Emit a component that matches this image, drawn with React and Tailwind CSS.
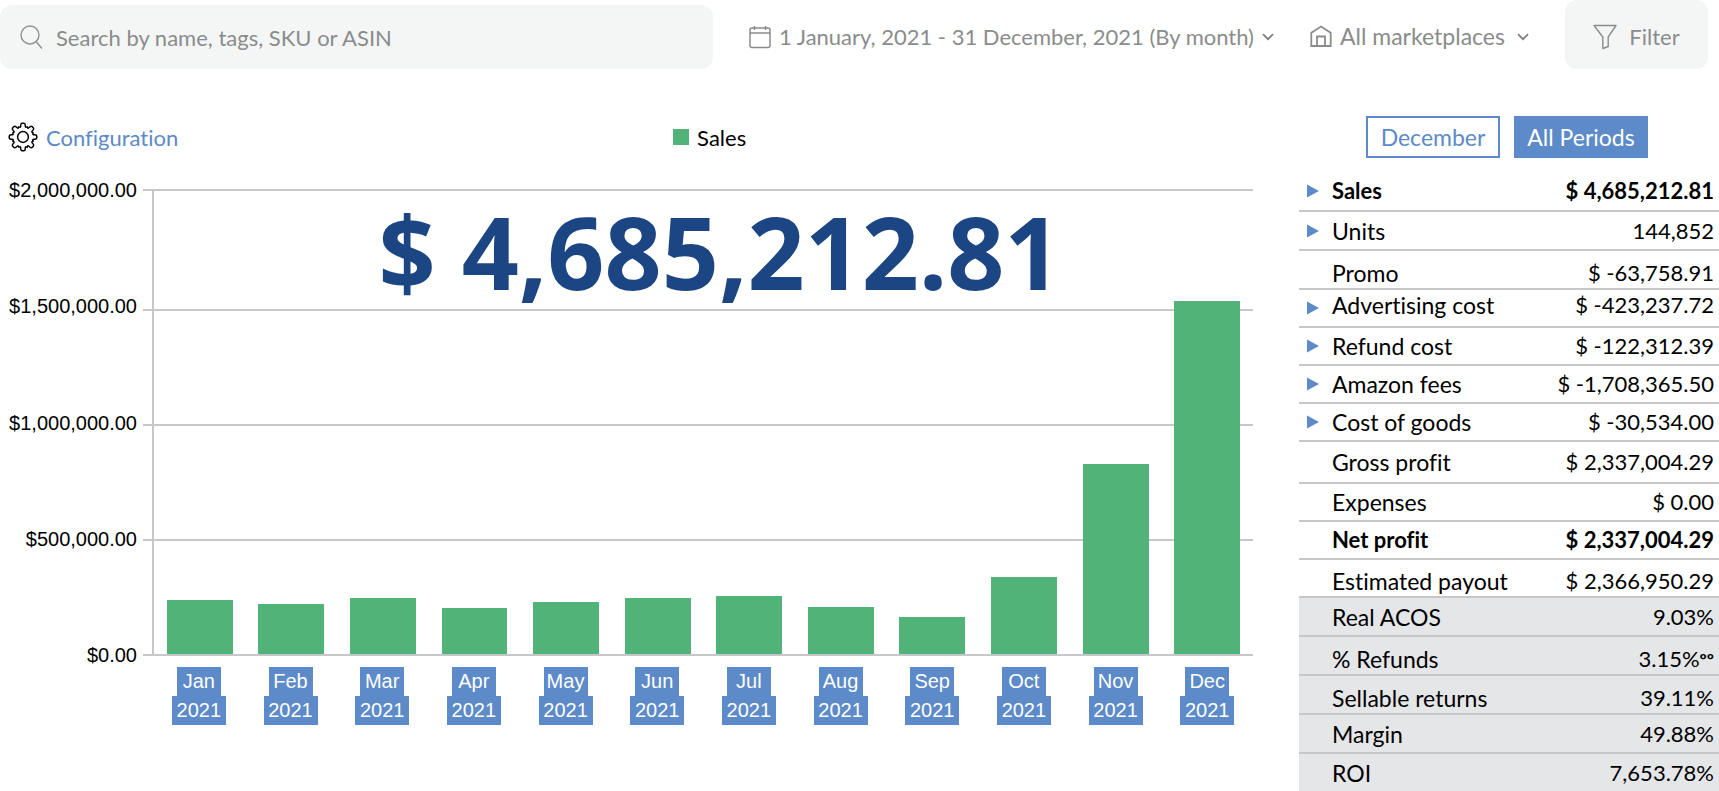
import React, { useState } from 'react';

const MAX_SALES = 2000000;

const AXIS_LABELS = ['$2,000,000.00', '$1,500,000.00', '$1,000,000.00', '$500,000.00', '$0.00'];

const MONTHS = [
    { name: 'Jan', sales: 232000 },
    { name: 'Feb', sales: 215000 },
    { name: 'Mar', sales: 239000 },
    { name: 'Apr', sales: 198000 },
    { name: 'May', sales: 224000 },
    { name: 'Jun', sales: 241000 },
    { name: 'Jul', sales: 250000 },
    { name: 'Aug', sales: 204000 },
    { name: 'Sep', sales: 160000 },
    { name: 'Oct', sales: 331000 },
    { name: 'Nov', sales: 819000 },
    { name: 'Dec', sales: 1518000 },
];

const ROWS = [
    { label: 'Sales', value: '$ 4,685,212.81', height: 'h-[39px]', expandable: true, bold: true },
    { label: 'Units', value: '144,852', height: 'h-[39px]', expandable: true },
    { label: 'Promo', value: '$ -63,758.91', height: 'h-[39px]', align: 'low' },
    { label: 'Advertising cost', value: '$ -423,237.72', height: 'h-[38px]', expandable: true, align: 'high' },
    { label: 'Refund cost', value: '$ -122,312.39', height: 'h-[38px]', expandable: true },
    { label: 'Amazon fees', value: '$ -1,708,365.50', height: 'h-[38px]', expandable: true },
    { label: 'Cost of goods', value: '$ -30,534.00', height: 'h-[38px]', expandable: true },
    { label: 'Gross profit', value: '$ 2,337,004.29', height: 'h-[42px]' },
    { label: 'Expenses', value: '$ 0.00', height: 'h-[38px]' },
    { label: 'Net profit', value: '$ 2,337,004.29', height: 'h-[38px]', bold: true },
    { label: 'Estimated payout', value: '$ 2,366,950.29', height: 'h-[38px]', align: 'low' },
    { label: 'Real ACOS', value: '9.03%', height: 'h-[39px]', shaded: true },
    { label: '% Refunds', value: '3.15%', height: 'h-[39px]', suffix: 'ºº', shaded: true, align: 'low' },
    { label: 'Sellable returns', value: '39.11%', height: 'h-[39px]', shaded: true, align: 'low' },
    { label: 'Margin', value: '49.88%', height: 'h-[39px]', shaded: true },
    { label: 'ROI', value: '7,653.78%', height: 'h-[38px]', shaded: true },
];

const ALIGN = {
    low: 'pt-1.5',
    high: 'pb-1.5',
};

const polar = (radius, degrees) => {
    const angle = (degrees * Math.PI) / 180;
    return `${(15 + radius * Math.cos(angle)).toFixed(2)} ${(15 + radius * Math.sin(angle)).toFixed(2)}`;
};

// eight rounded teeth, one every 45 degrees
const GEAR_PATH = [0, 45, 90, 135, 180, 225, 270, 315]
    .map((a, i) => (
        `${i === 0 ? 'M' : 'L'}${polar(12, a - 11)} Q${polar(13.8, a - 9)} ${polar(13.8, a - 4)} L${polar(13.8, a + 4)} Q${polar(13.8, a + 9)} ${polar(12, a + 11)} Q${polar(9.6, a + 13)} ${polar(10.4, a + 19)} L${polar(11, a + 22.5)} L${polar(10.4, a + 26)} Q${polar(9.6, a + 32)} ${polar(12, a + 34)}`
    ))
    .join(' ') + 'Z';

const GearIcon = () => (
    <svg width="30" height="30" viewBox="0 0 30 30" fill="none" stroke="#000" strokeWidth="1.5" strokeLinejoin="round">
        <path d={GEAR_PATH} />
        <circle cx="15" cy="15" r="5.4" />
    </svg>
);

const SearchIcon = () => (
    <svg width="24" height="26" viewBox="0 0 24 26" fill="none" stroke="#8f9191" strokeWidth="1.4">
        <circle cx="10" cy="11" r="9" />
        <path d="M16 17.500 22 24.500" />
    </svg>
);

const CalendarIcon = () => (
    <svg width="22" height="24" viewBox="0 0 22 24" fill="none" stroke="#8a8c8c" strokeWidth="1.5">
        <rect x="1" y="3" width="20" height="19.5" rx="2" />
        <path d="M1 8h20M5.500 1v4M16.500 1v4" />
    </svg>
);

const HouseIcon = () => (
    <svg width="22" height="23" viewBox="0 0 22 23" fill="none" stroke="#8a8c8c" strokeWidth="1.8">
        <path d="M1.300 21V7.800L11 1.500l9.700 6.300V21z" />
        <path d="M7 21V11.500h8V21" />
    </svg>
);

const FunnelIcon = () => (
    <svg width="24" height="26" viewBox="0 0 24 26" fill="none" stroke="#8a8c8c" strokeWidth="1.4" strokeLinejoin="round">
        <path d="M1 1.500h22L15.200 13v9.500L9.800 24.500V13z" />
    </svg>
);

const Chevron = () => (
    <svg width="12" height="8" viewBox="0 0 12 8" fill="none" stroke="#7d7f7f" strokeWidth="1.8">
        <path d="M1 1.200 6 6.200l5-5" />
    </svg>
);

const Header = () => (
    <header className="flex items-stretch text-[22px] text-[#8a8c8c]">
        <label className="mt-[5px] flex h-16 min-w-0 flex-1 items-center gap-3 rounded-xl bg-[#f4f6f5] pl-5">
            <SearchIcon />
            <input
                type="text"
                aria-label="Search"
                placeholder="Search by name, tags, SKU or ASIN"
                className="min-w-0 flex-1 bg-transparent outline-none placeholder:text-[#8a8c8c]"
            />
        </label>
        <button type="button" className="ml-9 mt-1 flex items-center gap-2 whitespace-nowrap">
            <CalendarIcon />
            <span>1 January, 2021 - 31 December, 2021 (By month)</span>
            <Chevron />
        </button>
        <label className="ml-9 mt-1 flex items-center gap-2">
            <HouseIcon />
            <select aria-label="Marketplace" className="mr-1 appearance-none bg-transparent text-[23px] outline-none">
                <option>All marketplaces</option>
            </select>
            <Chevron />
        </label>
        <button
            type="button"
            className="ml-9 mr-[11px] flex h-[69px] w-[143px] items-center justify-center gap-3 rounded-xl bg-[#f4f6f5] pt-1"
        >
            <FunnelIcon />
            Filter
        </button>
    </header>
);

const SalesChart = () => (
    <section className="min-w-0 flex-1 pl-2 pr-[46px]">
        <div className="flex h-[42px] items-center text-[22px]">
            <a href="#configuration" className="flex items-center gap-2 text-[#5d8ac8]">
                <GearIcon />
                Configuration
            </a>
            <div className="flex flex-1 items-center justify-center gap-2 pr-3">
                <span className="size-4 bg-[#51b377]" />
                Sales
            </div>
        </div>

        <div className="mt-[31px] flex font-['Liberation_Sans',Arial,sans-serif] text-[20px]">
            <div className="-my-[10px] flex w-[129px] flex-col justify-between text-right leading-[22px]">
                {AXIS_LABELS.map((label) => (
                    <span key={label}>{label}</span>
                ))}
            </div>
            <div className="ml-[6px] grid h-[467px] flex-1">
                <div className="col-start-1 row-start-1 flex flex-col border-y-2 border-[#c6c7c8]">
                    <div className="h-[120px] border-b-2 border-[#c6c7c8]" />
                    <div className="flex-1 border-b-2 border-[#c6c7c8]" />
                    <div className="flex-1 border-b-2 border-[#c6c7c8]" />
                    <div className="flex-1" />
                </div>
                <div className="col-start-1 row-start-1 ml-[9px] flex items-end border-l-2 border-[#c6c7c8] pb-[2px]">
                    {MONTHS.map((month) => (
                        <div key={month.name} className="flex h-full flex-1 items-end justify-center">
                            <div
                                className="w-[72%] bg-[#51b377]"
                                style={{ height: `${(month.sales / MAX_SALES) * 100}%` }}
                            />
                        </div>
                    ))}
                </div>
                <p className="col-start-1 row-start-1 mt-3 justify-self-center self-start pl-11 font-['Noto_Sans','Open_Sans',sans-serif] text-[100px] leading-[100px] font-bold whitespace-nowrap text-[#1c4583]">
                    $ 4,685,212.81
                </p>
            </div>
        </div>

        <div className="mt-[11px] flex pl-[145px] font-['Liberation_Sans',Arial,sans-serif] text-[20px] leading-[29px] text-white">
            {MONTHS.map((month) => (
                <div key={month.name} className="flex flex-1 flex-col items-center">
                    <span className="w-11 bg-[#5d8ac8] text-center">{month.name}</span>
                    <span className="w-[54px] bg-[#5d8ac8] text-center">2021</span>
                </div>
            ))}
        </div>
    </section>
);

const Summary = () => {
    const [period, setPeriod] = useState('All Periods');

    return (
        <aside className="w-[420px] shrink-0">
            <div className="flex justify-center gap-[14px] pr-1">
                {['December', 'All Periods'].map((name) => (
                    <button
                        key={name}
                        type="button"
                        onClick={() => setPeriod(name)}
                        className={`h-[42px] w-[134px] border-2 border-[#5d8ac8] text-[23px] leading-[26px] ${period === name ? 'bg-[#5d8ac8] text-white' : 'bg-white text-[#5d8ac8]'
                            }`}
                    >
                        {name}
                    </button>
                ))}
            </div>

            <table className="mt-[14px] w-full border-collapse text-[22px] leading-[26px]">
                <tbody>
                    {ROWS.map((row) => (
                        <tr
                            key={row.label}
                            className={`border-b-2 border-[#c6c7c8] last:border-b-0 ${row.height} ${row.shaded ? 'bg-[#e5e6e8]' : ''} ${row.bold ? 'font-bold' : ''}`}
                        >
                            <td className="w-[33px] p-0 pl-2">
                                {row.expandable && (
                                    <button type="button" aria-label={`Expand ${row.label}`} className="block">
                                        <svg width="12" height="14" viewBox="0 0 12 14" fill="#5d8ac8">
                                            <path d="M0 0.500 12 7 0 13.500z" />
                                        </svg>
                                    </button>
                                )}
                            </td>
                            <th scope="row" className={`p-0 text-left ${row.bold ? 'font-bold' : 'text-[23px] font-normal'} ${ALIGN[row.align] || ''}`}>
                                {row.label}
                            </th>
                            <td className={`p-0 pr-[5px] text-right ${ALIGN[row.align] || ''}`}>
                                {row.value}
                                {row.suffix && <span className="text-lg leading-[20px] font-bold">{row.suffix}</span>}
                            </td>
                        </tr>
                    ))}
                </tbody>
            </table>
        </aside>
    );
};

const App = () => (
    <div className="min-h-screen bg-white font-['Lato',Carlito,sans-serif] text-black [font-variant-ligatures:none]">
        <Header />
        <main className="mt-[47px] flex">
            <SalesChart />
            <Summary />
        </main>
    </div>
);

export default App;
